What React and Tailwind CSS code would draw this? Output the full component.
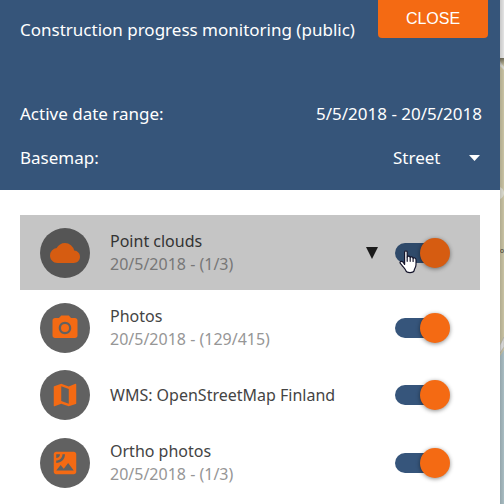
import React, { useState } from "react";
import { MdCameraAlt, MdCloud, MdMap, MdSatellite } from "react-icons/md";

const initialLayers = [
  { id: "clouds", name: "Point clouds", info: "20/5/2018 - (1/3)", Icon: MdCloud },
  { id: "photos", name: "Photos", info: "20/5/2018 - (129/415)", Icon: MdCameraAlt },
  { id: "wms", name: "WMS: OpenStreetMap Finland", Icon: MdMap },
  { id: "ortho", name: "Ortho photos", info: "20/5/2018 - (1/3)", Icon: MdSatellite },
];

function HandCursor() {
  return (
    <svg
      className="pointer-events-none absolute left-1 top-3 h-6 w-5"
      viewBox="0 0 20 24"
      fill="white"
      stroke="#14142b"
      strokeWidth="1.2"
      strokeLinejoin="round"
      strokeLinecap="round"
    >
      <path d="M5.6 14.4V2.2C5.6 .3 8.2 .3 8.2 2.2V7C8.6 5.8 11 5.9 11.2 7.5C11.8 6.5 13.9 6.7 14.1 8.3C14.8 7.5 17 7.9 17 9.8V14.5C17 17.5 15.4 18.5 15.2 20.4C14.6 23.4 7.4 23.4 6.6 20.2C6.2 18.6 3.6 16.6 2.7 15C2.2 14.1 1 13.4 1 12.4C1.2 11 3 11 4 12Z" />
      <path d="M8.2 7V11.3M11.2 7.8V11.3M14.1 8.6V11.5" fill="none" />
    </svg>
  );
}

function Toggle({ label, checked, onChange, active }) {
  return (
    <label className="relative flex h-[30px] w-[55px] shrink-0 cursor-pointer items-center">
      <input
        type="checkbox"
        aria-label={label}
        className="peer sr-only"
        checked={checked}
        onChange={onChange}
      />
      <span
        className={`h-5 w-[50px] rounded-full ${active ? "bg-[#2f4a6a]" : "bg-[#36557b]"}`}
      />
      <span
        className={`absolute left-0 top-0 h-[30px] w-[30px] rounded-full shadow-[0_1px_4px_rgba(0,0,0,0.45)] duration-300 peer-checked:left-[25px] ${
          active ? "bg-[#d65c11]" : "bg-[#f46a13]"
        }`}
      />
      {active && <HandCursor />}
    </label>
  );
}

function LayerRow({ layer, active, checked, onToggle }) {
  const { Icon, name, info } = layer;

  return (
    <li
      className={`flex items-center pl-5 pr-[30px] ${info ? "min-h-[75px]" : "min-h-[60px]"} ${
        active ? "bg-[#c5c5c5]" : ""
      }`}
    >
      <span
        className={`flex h-[50px] w-[50px] shrink-0 items-center justify-center rounded-full ${
          active ? "bg-[#555555] text-[#d65c11]" : "bg-[#616161] text-[#f46a13]"
        }`}
      >
        <Icon size={30} />
      </span>
      <div className="ml-5 min-w-0 flex-1 text-base leading-[23px]">
        <p className={active ? "text-[#333333]" : "text-[#444444]"}>{name}</p>
        {info && <p className={active ? "text-[#777777]" : "text-[#969696]"}>{info}</p>}
      </div>
      {active && (
        <button type="button" aria-label="Expand" className="mr-4 p-px">
          <svg className="h-3 w-3" viewBox="0 0 12 12" fill="#1b1b1b">
            <path d="M0 0H12L6 12Z" />
          </svg>
        </button>
      )}
      <Toggle label={name} checked={checked} onChange={onToggle} active={active} />
    </li>
  );
}

function Header() {
  const [basemap, setBasemap] = useState("Street");

  return (
    <header className="bg-[#36557a] pb-5 text-[17px] leading-6 text-white">
      <div className="flex items-start justify-between pl-5 pr-3">
        <h1 className="pt-[18px]">Construction progress monitoring (public)</h1>
        <button
          type="button"
          className="h-[38px] w-[110px] shrink-0 rounded-b-sm bg-[#f46a13] font-['Liberation_Sans',sans-serif] text-base"
        >
          CLOSE
        </button>
      </div>
      <div className="mt-[60px] flex justify-between pl-5 pr-[18px]">
        <span>Active date range:</span>
        <span>5/5/2018 - 20/5/2018</span>
      </div>
      <div className="mt-5 flex items-center justify-between pl-5 pr-5">
        <label htmlFor="basemap">Basemap:</label>
        <div className="relative flex items-center">
          <select
            id="basemap"
            value={basemap}
            onChange={(e) => setBasemap(e.target.value)}
            className="w-[87px] appearance-none bg-transparent outline-none"
          >
            <option>Street</option>
            <option>Satellite</option>
          </select>
          <svg
            className="pointer-events-none absolute right-0 h-[6px] w-[11px]"
            viewBox="0 0 11 6"
            fill="white"
          >
            <path d="M0 0H11L5.5 6Z" />
          </svg>
        </div>
      </div>
    </header>
  );
}

// sliver of the map that stays visible next to the panel
function MapEdge() {
  return (
    <div className="relative w-1 shrink-0 overflow-hidden bg-[#a5b8be]">
      <svg
        className="absolute inset-0 h-full w-full"
        viewBox="0 0 4 504"
        preserveAspectRatio="xMinYMin slice"
      >
        <defs>
          <linearGradient id="edge" x1="0" x2="1" y1="0" y2="0">
            <stop offset="0" stopColor="#000" stopOpacity="0.12" />
            <stop offset="1" stopColor="#000" stopOpacity="0" />
          </linearGradient>
          <linearGradient id="bar" x1="0" x2="0" y1="0" y2="1">
            <stop offset="0" stopColor="#000" stopOpacity="0.45" />
            <stop offset="1" stopColor="#000" stopOpacity="0" />
          </linearGradient>
        </defs>
        <rect width="4" height="504" fill="#a9bdc3" />
        <path d="M0 58H4V350L0 356Z" fill="#c9c3a3" />
        <path d="M0 61L4 67V70L0 66Z" fill="#d8d8d0" />
        <path d="M0 187Q4 189 4 193Q4 197 0 199Z" fill="#dcdcd0" />
        <path d="M0 345L4 337V347L0 353Z" fill="#dedede" stroke="#a9a9a0" strokeWidth="0.6" />
        <text x="0" y="253" fontSize="7" fontFamily="Roboto, sans-serif" fill="#3d3a32">
          o
        </text>
        <rect y="58" width="4" height="8" fill="url(#bar)" />
        <rect width="4" height="58" fill="#e3e3e3" />
        <rect width="4" height="504" fill="url(#edge)" />
      </svg>
    </div>
  );
}

function App() {
  const [visible, setVisible] = useState({
    clouds: true,
    photos: true,
    wms: true,
    ortho: true,
  });

  const toggleLayer = (id) => {
    setVisible((prev) => ({ ...prev, [id]: !prev[id] }));
  };

  return (
    <div className="flex min-h-screen bg-white font-['Noto_Sans',sans-serif]">
      <main className="min-w-0 flex-1">
        <Header />
        <ul className="px-5 pt-[25px]">
          {initialLayers.map((layer) => (
            <LayerRow
              key={layer.id}
              layer={layer}
              active={layer.id === "clouds"}
              checked={visible[layer.id]}
              onToggle={() => toggleLayer(layer.id)}
            />
          ))}
        </ul>
      </main>
      <MapEdge />
    </div>
  );
}

export default App;
